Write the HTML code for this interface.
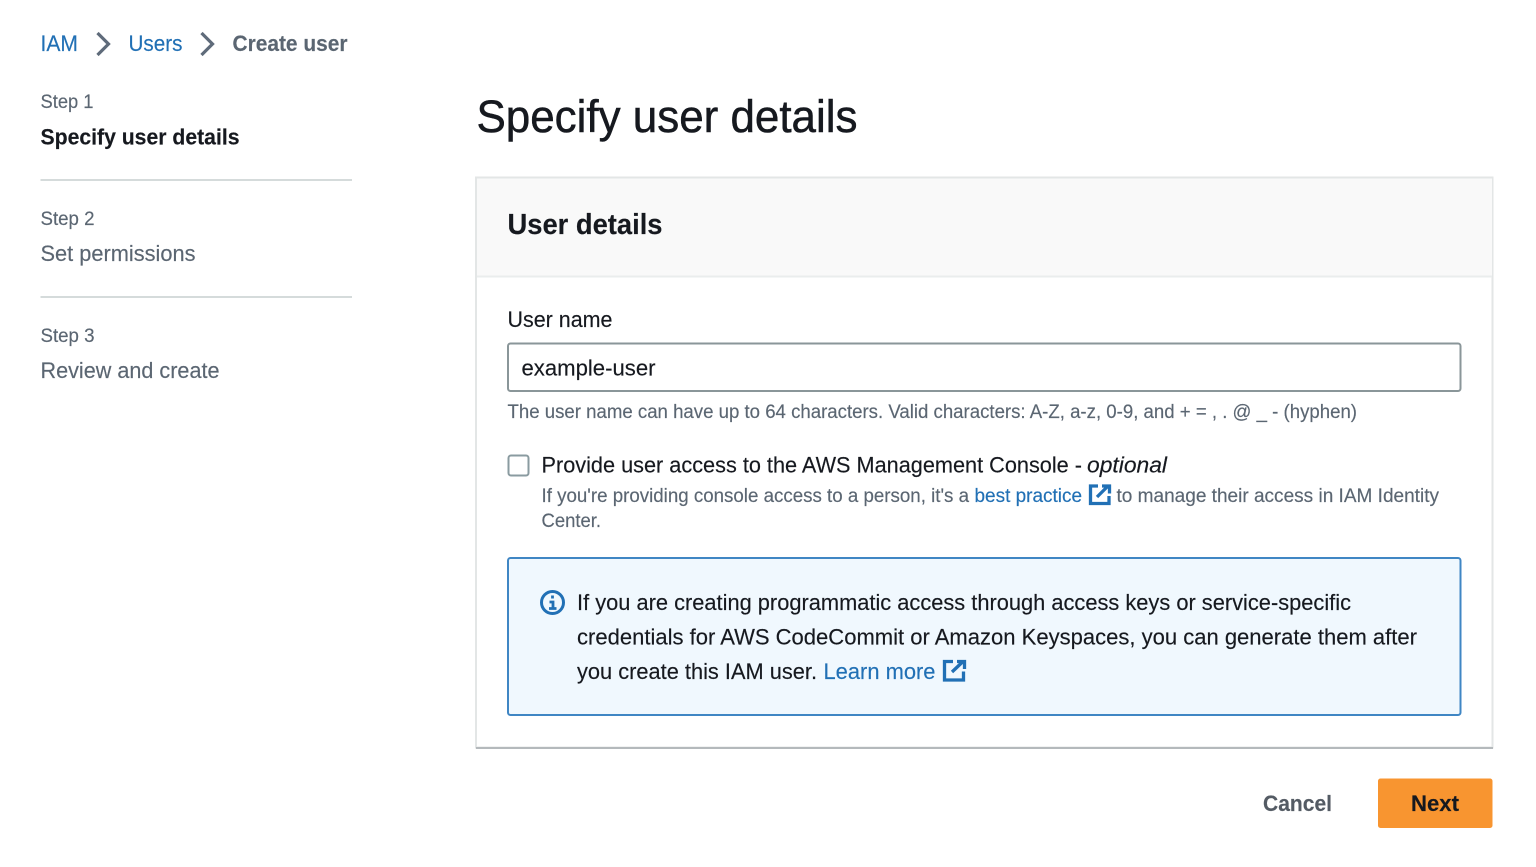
<!DOCTYPE html>
<html lang="en">
<head>
<meta charset="utf-8">
<title>Specify user details</title>
<style>
html,body{margin:0;padding:0;background:#fff;width:1536px;height:867px;overflow:hidden}
svg{display:block;position:absolute;left:0;top:0}
text{font-family:"Liberation Sans",sans-serif;fill:#16191f;stroke:#16191f;stroke-width:.15px}
.b{font-weight:700}
.l{fill:#2170b5;stroke:#2170b5}
.g{fill:#5b6672;stroke:#5b6672}
</style>
</head>
<body>
<svg width="1536" height="867" viewBox="0 0 1536 867" xmlns="http://www.w3.org/2000/svg">
<rect width="1536" height="867" fill="#fff"/>

<!-- breadcrumb -->
<text class="l" x="40.500" y="51" font-size="22" textLength="37.500" lengthAdjust="spacingAndGlyphs">IAM</text>
<path d="M97.500 33 L108.500 44 L97.500 55" fill="none" stroke="#5f6b7a" stroke-width="3.200"/>
<text class="l" x="128.500" y="51" font-size="22" textLength="54" lengthAdjust="spacingAndGlyphs">Users</text>
<path d="M201.500 33 L212.500 44 L201.500 55" fill="none" stroke="#5f6b7a" stroke-width="3.200"/>
<text class="b g" x="232.500" y="51" font-size="22" textLength="115" lengthAdjust="spacingAndGlyphs">Create user</text>

<!-- steps -->
<text class="g" x="40.500" y="108" font-size="19" textLength="53" lengthAdjust="spacingAndGlyphs">Step 1</text>
<text class="b" x="40.500" y="144.500" font-size="22" textLength="199" lengthAdjust="spacingAndGlyphs">Specify user details</text>
<rect x="40.500" y="179" width="311.500" height="2" fill="#d5dbdb"/>
<text class="g" x="40.500" y="225" font-size="19" textLength="54" lengthAdjust="spacingAndGlyphs">Step 2</text>
<text class="g" x="40.500" y="261" font-size="22" textLength="155" lengthAdjust="spacingAndGlyphs">Set permissions</text>
<rect x="40.500" y="296" width="311.500" height="2" fill="#d5dbdb"/>
<text class="g" x="40.500" y="342" font-size="19" textLength="54" lengthAdjust="spacingAndGlyphs">Step 3</text>
<text class="g" x="40.500" y="378" font-size="22" textLength="179" lengthAdjust="spacingAndGlyphs">Review and create</text>

<!-- heading -->
<text x="476.500" y="132" font-size="45" style="stroke-width:.5px" textLength="381" lengthAdjust="spacingAndGlyphs">Specify user details</text>

<!-- card -->
<rect x="476" y="177.500" width="1016.500" height="570" fill="#fff" stroke="#e3e6e6" stroke-width="2"/>
<rect x="476" y="747" width="1017" height="2" fill="#b4b9bc"/>
<rect x="477" y="178.500" width="1015" height="97" fill="#f9f9f9"/>
<rect x="477" y="275.500" width="1015" height="2" fill="#eaeded"/>
<text class="b" x="507.500" y="234" font-size="29" textLength="155" lengthAdjust="spacingAndGlyphs">User details</text>

<text x="507.500" y="327" font-size="22" textLength="105" lengthAdjust="spacingAndGlyphs">User name</text>
<rect x="508" y="343.500" width="952.500" height="47.500" rx="2.500" fill="#fff" stroke="#8a9699" stroke-width="2"/>
<text x="521.500" y="375.500" font-size="22" textLength="134" lengthAdjust="spacingAndGlyphs">example-user</text>
<text class="g" x="507.500" y="418" font-size="19" textLength="849.500" lengthAdjust="spacingAndGlyphs">The user name can have up to 64 characters. Valid characters: A-Z, a-z, 0-9, and + = , . @ _ - (hyphen)</text>

<rect x="508.500" y="455.500" width="20" height="20" rx="2.500" fill="#fff" stroke="#8a9ba0" stroke-width="2"/>
<text x="541.500" y="472.500" font-size="22" textLength="540.500" lengthAdjust="spacingAndGlyphs">Provide user access to the AWS Management Console -</text>
<text x="1087" y="472.500" font-size="22" font-style="italic" textLength="80" lengthAdjust="spacingAndGlyphs">optional</text>
<text class="g" x="541.500" y="502" font-size="19" textLength="427.500" lengthAdjust="spacingAndGlyphs">If you're providing console access to a person, it's a</text>
<text class="l" x="974.500" y="502" font-size="19" textLength="107.500" lengthAdjust="spacingAndGlyphs">best practice</text>
<path d="M1098 486 H1090.500 V503.500 H1109 V496 M1097 497 L1108 486 M1102 486 H1109.500 V493.500" fill="none" stroke="#2170b5" stroke-width="3.300"/>
<text class="g" x="1116.500" y="502" font-size="19" textLength="322.500" lengthAdjust="spacingAndGlyphs">to manage their access in IAM Identity</text>
<text class="g" x="541.500" y="527" font-size="19" textLength="59.500" lengthAdjust="spacingAndGlyphs">Center.</text>

<!-- info box -->
<rect x="508" y="558" width="952.500" height="157" rx="2.500" fill="#f0f8fe" stroke="#3f86c4" stroke-width="2"/>
<circle cx="552.500" cy="602.500" r="11" fill="none" stroke="#2170b5" stroke-width="3"/>
<path d="M552.500 595.500 V598.500 M549.500 602 H553 V608 M549 608.500 H556.500" fill="none" stroke="#2170b5" stroke-width="2.800"/>
<text x="577" y="610" font-size="22" textLength="774" lengthAdjust="spacingAndGlyphs">If you are creating programmatic access through access keys or service-specific</text>
<text x="577" y="644.500" font-size="22" textLength="840" lengthAdjust="spacingAndGlyphs">credentials for AWS CodeCommit or Amazon Keyspaces, you can generate them after</text>
<text x="577" y="679" font-size="22" textLength="240" lengthAdjust="spacingAndGlyphs">you create this IAM user.</text>
<text class="l" x="823.500" y="679" font-size="22" textLength="112" lengthAdjust="spacingAndGlyphs">Learn more</text>
<path d="M953 661.500 H944.500 V680 H963.500 V671.500 M952 672 L963 661.500 M957 661.500 H964.500 V669" fill="none" stroke="#2170b5" stroke-width="3.300"/>

<!-- actions -->
<text class="b" x="1263" y="811" font-size="22" style="fill:#545b64;stroke:#545b64" textLength="69" lengthAdjust="spacingAndGlyphs">Cancel</text>
<rect x="1378" y="778.500" width="114.500" height="49.500" rx="2.500" fill="#f89530"/>
<text class="b" x="1411" y="811" font-size="22" textLength="48" lengthAdjust="spacingAndGlyphs">Next</text>
</svg>
</body>
</html>
